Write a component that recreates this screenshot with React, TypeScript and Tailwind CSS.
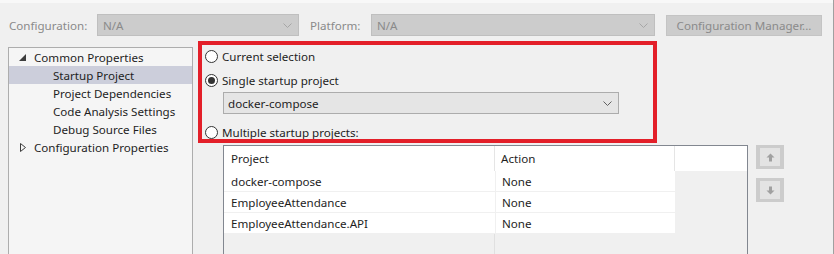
import React from "react";

const Chevron = ({ color = "#a6a6a6" }: { color?: string }) => (
  <svg width="9" height="5" viewBox="0 0 9 5" fill="none">
    <path d="M0.5 0.5 L4.5 4.5 L8.5 0.5" stroke={color} strokeWidth="1" />
  </svg>
);

const Radio = ({ checked }: { checked?: boolean }) => (
  <span className="flex items-center justify-center w-[13px] h-[13px] rounded-full border border-[#333333] bg-white shrink-0">
    {checked && <span className="w-[7px] h-[7px] rounded-full bg-[#333333]" />}
  </span>
);

const ArrowButton = ({ down }: { down?: boolean }) => (
  <div className="w-[28px] h-[24px] bg-[#cccccc] flex items-center justify-center">
    <div className="w-[20px] h-[18px] bg-[#e3e3e3] flex items-center justify-center">
      <svg width="9" height="9" viewBox="0 0 9 9" className={down ? "rotate-180" : ""}>
        <path d="M4.5 0.5 L8.5 4.5 L6 4.5 L6 8.5 L3 8.5 L3 4.5 L0.5 4.5 Z" fill="#a0a0a0" />
      </svg>
    </div>
  </div>
);

const treeItems = [
  { label: "Common Properties", level: 0, expanded: true },
  { label: "Startup Project", level: 1, selected: true },
  { label: "Project Dependencies", level: 1 },
  { label: "Code Analysis Settings", level: 1 },
  { label: "Debug Source Files", level: 1 },
  { label: "Configuration Properties", level: 0, expanded: false },
];

const projects = ["docker-compose", "EmployeeAttendance", "EmployeeAttendance.API"];

export default function App() {
  return (
    <div
      className="relative w-[834px] h-[254px] overflow-hidden bg-[#f0f0f0] text-[11.6px] text-[#1e1e1e] border-r border-[#a0a0a0]"
      style={{ fontFamily: '"Noto Sans", "Open Sans", sans-serif' }}
    >
      <div className="h-[3px] bg-[#f8f8f8]" />

      {/* Configuration / Platform bar */}
      <div className="flex items-center mt-[11px] h-[22px] pl-[9px] text-[#8a8a8a]">
        <span className="w-[88px] pt-[1px]">Configuration:</span>
        <div className="w-[202px] h-[22px] bg-[#cccccc] border border-[#bfbfbf] flex items-center justify-between pl-[5px] pr-[6px]">
          <span className="pt-[1px]">N/A</span>
          <Chevron />
        </div>
        <span className="ml-[11px] w-[61px] pt-[1px]">Platform:</span>
        <div className="w-[284px] h-[22px] bg-[#cccccc] border border-[#bfbfbf] flex items-center justify-between pl-[5px] pr-[6px]">
          <span className="pt-[1px]">N/A</span>
          <Chevron />
        </div>
        <div className="ml-[11px] w-[156px] h-[21px] bg-[#cccccc] border border-[#c4c4c4] flex items-center justify-center pt-[1px]">
          Configuration Manager...
        </div>
      </div>

      {/* Body */}
      <div className="flex mt-[11px]">
        {/* Tree */}
        <div className="ml-[8px] w-[185px] h-[230px] bg-[#f5f5f5] border border-[#adadad]">
          {treeItems.map((it) => (
            <div
              key={it.label}
              className={`flex items-center h-[18px] pt-[1px] ${it.selected ? "bg-[#cccedb]" : ""}`}
            >
              {it.level === 0 ? (
                <span className="w-[25px] flex justify-end pr-[8px]">
                  {it.expanded ? (
                    <svg width="7" height="7" viewBox="0 0 7 7">
                      <path d="M7 0 L7 7 L0 7 Z" fill="#3c3c3c" />
                    </svg>
                  ) : (
                    <svg width="6" height="9" viewBox="0 0 6 9">
                      <path d="M0.5 0.5 L5.5 4.5 L0.5 8.5 Z" fill="none" stroke="#3c3c3c" strokeWidth="1" />
                    </svg>
                  )}
                </span>
              ) : (
                <span className="w-[44px]" />
              )}
              <span>{it.label}</span>
            </div>
          ))}
        </div>

        {/* Startup project options */}
        <div className="ml-[12px] flex flex-col">
          <div className="flex items-center h-[18px] gap-[4px]">
            <Radio />
            <span className="pt-[1px]">Current selection</span>
          </div>
          <div className="flex items-center h-[18px] gap-[4px] mt-[6px]">
            <Radio checked />
            <span className="pt-[1px]">Single startup project</span>
          </div>
          <div className="ml-[18px] mt-[3px] w-[396px] h-[22px] bg-[#e5e5e5] border border-[#acacac] flex items-center justify-between pl-[4px] pr-[6px]">
            <span className="pt-[1px]">docker-compose</span>
            <Chevron color="#606060" />
          </div>
          <div className="flex items-center h-[18px] gap-[4px] mt-[9px]">
            <Radio />
            <span className="pt-[1px]">Multiple startup projects:</span>
          </div>

          <div className="flex mt-[4px]">
            <div className="ml-[18px] w-[525px] h-[120px] border border-[#828790] flex flex-col">
              <div className="flex h-[25px] bg-white">
                <div className="w-[271px] pl-[7px] pt-[1px] flex items-center border-r border-[#e5e5e5]">Project</div>
                <div className="w-[180px] pl-[6px] pt-[1px] flex items-center border-r border-[#e5e5e5]">Action</div>
                <div className="flex-1" />
              </div>
              {projects.map((p) => (
                <div key={p} className="flex h-[21px]">
                  <div className="w-[271px] pl-[7px] pt-[1px] flex items-center bg-white border-b border-[#f0f0f0]">{p}</div>
                  <div className="w-[180px] pl-[6px] pt-[1px] flex items-center bg-white border-b border-l border-[#f0f0f0]">None</div>
                  <div className="flex-1" />
                </div>
              ))}
              <div className="flex flex-1">
                <div className="w-[271px] border-r border-[#e0e0e0]" />
              </div>
            </div>
            <div className="ml-[8px] flex flex-col gap-[9px]">
              <ArrowButton />
              <ArrowButton down />
            </div>
          </div>
        </div>
      </div>

      {/* Red highlight annotation */}
      <div className="absolute left-[198px] top-[41px] w-[459px] h-[102px] border-[4px] border-[#e31f29] pointer-events-none" />
    </div>
  );
}
